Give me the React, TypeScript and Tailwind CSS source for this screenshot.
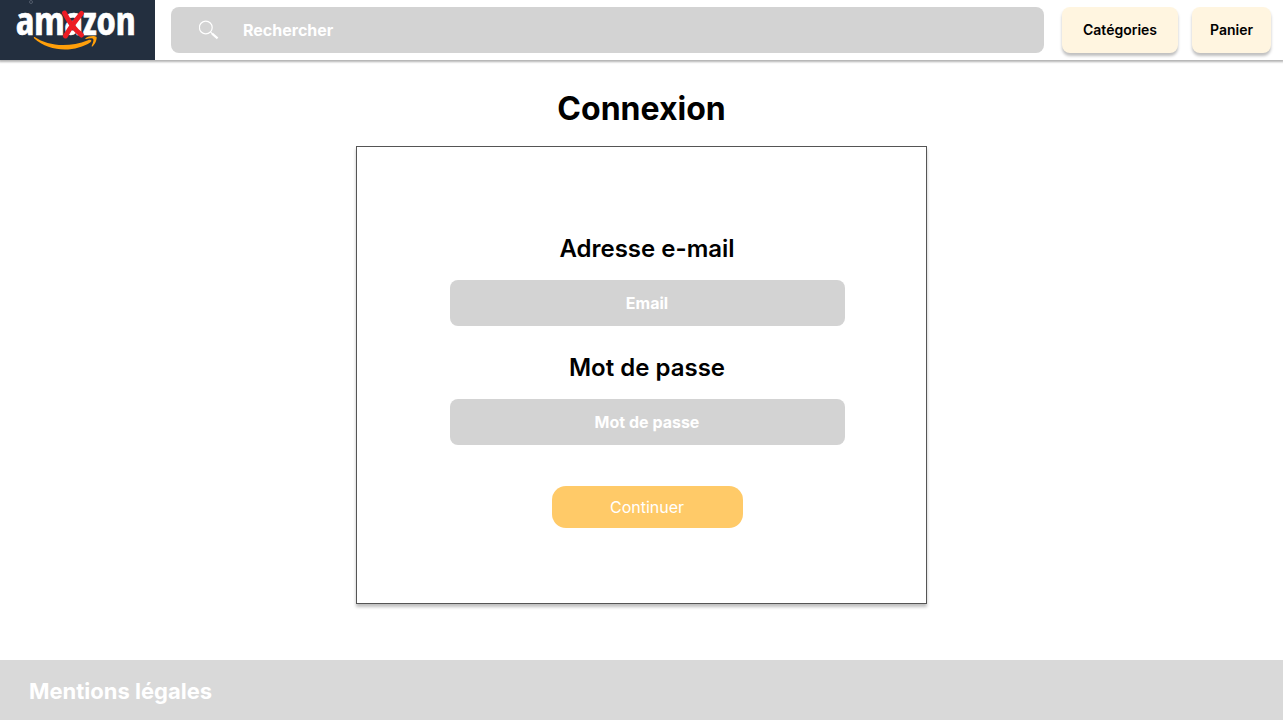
import React from "react";

function Logo() {
  return (
    <a href="#accueil" aria-label="amazon" className="block h-[60px] w-[155px] shrink-0 bg-[#232f3f]">
      <svg viewBox="0 0 155 60" className="block h-full w-full">
        <circle cx="31" cy="2" r="1.5" fill="none" stroke="#5c6675" strokeWidth="0.8" />
        <text
          x="16"
          y="35"
          fill="#ffffff"
          stroke="#ffffff"
          strokeWidth="0.6"
          fontSize="39"
          fontWeight="700"
          fontFamily="'Open Sans Condensed', 'Noto Sans Condensed', 'Roboto Condensed', Roboto, sans-serif"
        >
          amazon
        </text>
        <path
          d="M34.6 37 C48 46 68 48 88 40.2 C91 39 92.5 40.7 90.5 42.2 C76 52 50 53 34 38.2 C33.5 37.4 34 36.7 34.6 37Z"
          fill="#ff9f0a"
        />
        <path
          d="M85.5 38.2 C88 35.8 94.5 35.2 96.4 36.7 C97.4 38.2 95.5 43.8 92.6 46.4 C91.8 46.8 91.3 46.4 91.8 45.5 C93 42.5 94 39.8 93.2 38.9 C92 38 88.4 38.4 86.2 38.9 C85.3 39 85 38.7 85.5 38.2Z"
          fill="#ff9f0a"
        />
        <path
          d="M64.5 13 C68 20 75 30 81.5 35 M81.5 13.5 C76 20 70 28 65.5 36"
          fill="none"
          stroke="#ed1c24"
          strokeWidth="5"
          strokeLinecap="round"
        />
      </svg>
    </a>
  );
}

function SearchIcon() {
  return (
    <svg viewBox="0 0 20 20" className="h-5 w-5 shrink-0" fill="none" stroke="#ffffff">
      <circle cx="6.8" cy="7.5" r="6.4" strokeWidth="1.2" />
      <path d="M11.7 12.2 L13.5 14" strokeWidth="1.2" />
      <path d="M13.1 13.6 L18.6 18.4" strokeWidth="2.2" />
    </svg>
  );
}

const navButton =
  "h-[46px] rounded-lg bg-[#fff5e0] text-sm font-semibold text-black shadow-[0_3px_3px_rgba(0,0,0,0.25)]";
const label = "text-2xl leading-[30px] font-semibold text-black";
const field =
  "mt-4 h-[46px] w-full rounded-lg bg-[#d3d3d3] px-4 text-center text-base font-bold text-white outline-none placeholder:text-white placeholder:opacity-100";

export default function App() {
  return (
    <div className="flex min-h-screen flex-col bg-white font-['Inter',sans-serif]">
      <header className="flex h-[60px] items-center pr-3 shadow-[0_1px_2px_1px_rgba(0,0,0,0.3)]">
        <Logo />
        <label className="ml-4 flex h-[46px] flex-1 items-center gap-6 rounded-lg bg-[#d3d3d3] px-7">
          <SearchIcon />
          <input
            type="search"
            aria-label="Rechercher"
            placeholder="Rechercher"
            className="min-w-0 flex-1 bg-transparent text-base font-bold text-white outline-none placeholder:text-white placeholder:opacity-100"
          />
        </label>
        <nav className="ml-[18px] flex gap-[14px]">
          <button type="button" className={`${navButton} w-[116px]`}>
            Catégories
          </button>
          <button type="button" className={`${navButton} w-[79px]`}>
            Panier
          </button>
        </nav>
      </header>

      <main className="flex flex-1 flex-col items-center px-4 pt-[29px] pb-14">
        <h1 className="text-[32px] leading-10 font-bold text-black">Connexion</h1>
        <form
          onSubmit={(event) => event.preventDefault()}
          className="mt-[17px] flex w-full max-w-[571px] flex-col items-center border border-[#555555] pt-[87px] pr-0 pb-[75px] pl-[11px] shadow-[0_3px_3px_rgba(0,0,0,0.25)]"
        >
          <div className="w-full max-w-[395px] text-center">
            <label htmlFor="email" className={label}>
              Adresse e-mail
            </label>
            <input id="email" type="email" placeholder="Email" className={field} />
          </div>
          <div className="mt-[27px] w-full max-w-[395px] text-center">
            <label htmlFor="password" className={label}>
              Mot de passe
            </label>
            <input id="password" type="password" placeholder="Mot de passe" className={field} />
          </div>
          <button
            type="submit"
            className="mt-[41px] h-[42px] w-[191px] rounded-[14px] bg-[#ffca68] text-base text-white"
          >
            Continuer
          </button>
        </form>
      </main>

      <footer className="flex h-[60px] items-center bg-[#d9d9d9] px-[29px] pt-0.5">
        <a href="#mentions-legales" className="text-[22px] leading-7 font-bold text-white">
          Mentions légales
        </a>
      </footer>
    </div>
  );
}
